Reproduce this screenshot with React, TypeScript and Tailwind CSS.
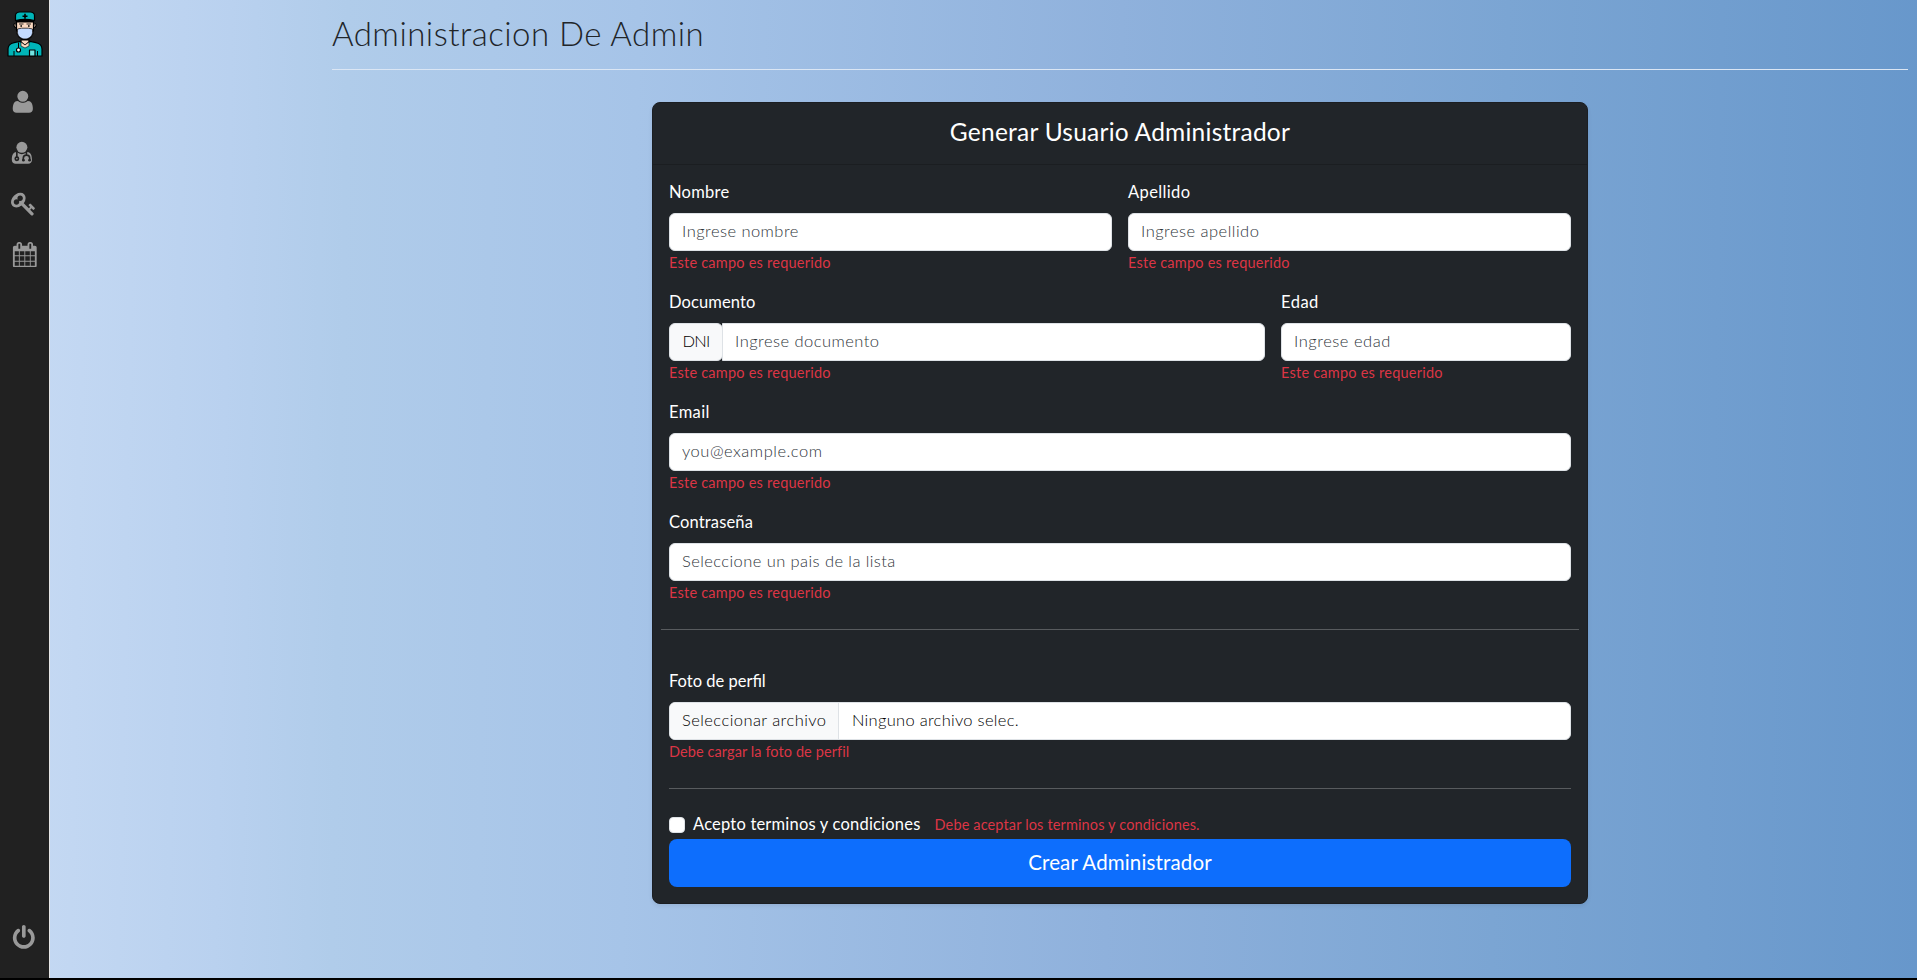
import type { ReactNode } from "react";

const faPaths = {
  user: "M1600 1405q0 120-73 189.5t-194 69.5h-874q-121 0-194-69.5t-73-189.5q0-53 3.5-103.5t14-109 26.5-108.5 43-97.5 62-81 85.5-53.5 111.5-20q9 0 42 21.5t74.5 48 108 48 133.5 21.5 133.5-21.5 108-48 74.5-48 42-21.5q61 0 111.5 20t85.5 53.5 62 81 43 97.5 26.5 108.5 14 109 3.5 103.5zm-320-893q0 159-112.5 271.5t-271.5 112.5-271.5-112.5-112.5-271.5 112.5-271.5 271.5-112.5 271.5 112.5 112.5 271.5z",
  key: "M832 512q0-80-56-136t-136-56-136 56-56 136q0 42 19 83-41-19-83-19-80 0-136 56t-56 136 56 136 136 56 136-56 56-136q0-42-19-83 41 19 83 19 80 0 136-56t56-136zm851 704q0 17-49 66t-66 49q-9 0-28.5-16t-36.5-33-38.5-40-24.5-26l-96 96 220 220q28 28 28 68 0 42-39 81t-81 39q-40 0-68-28l-671-671q-176 131-365 131-163 0-265.5-102.5t-102.5-265.5q0-160 95-313t248-248 313-95q163 0 265.5 102.5t102.5 265.5q0 189-131 365l355 355 96-96q-3-3-26-24.5t-40-38.5-33-36.5-16-28.5q0-17 49-66t66-49q13 0 23 10 6 6 46 44.5t82 79.5 86.5 86 73 78 28.5 41z",
  calendar: "M192 1664h288v-288h-288v288zm352 0h320v-288h-320v288zm-352-352h288v-320h-288v320zm352 0h320v-320h-320v320zm-352-384h288v-288h-288v288zm736 736h320v-288h-320v288zm-384-736h320v-288h-320v288zm768 736h288v-288h-288v288zm-384-352h320v-320h-320v320zm-352-864v-288q0-13-9.5-22.5t-22.5-9.5h-64q-13 0-22.5 9.5t-9.5 22.5v288q0 13 9.5 22.5t22.5 9.5h64q13 0 22.5-9.5t9.5-22.5zm736 864h288v-320h-288v320zm-384-384h320v-288h-320v288zm384 0h288v-288h-288v288zm32-480v-288q0-13-9.5-22.5t-22.5-9.5h-64q-13 0-22.5 9.5t-9.5 22.5v288q0 13 9.5 22.5t22.5 9.5h64q13 0 22.5-9.5t9.5-22.5zm384-64v1280q0 52-38 90t-90 38h-1408q-52 0-90-38t-38-90v-1280q0-52 38-90t90-38h128v-96q0-66 47-113t113-47h64q66 0 113 47t47 113v96h384v-96q0-66 47-113t113-47h64q66 0 113 47t47 113v96h128q52 0 90 38t38 90z",
  power: "M1664 896q0 156-61 298t-164 245-245 164-298 61-298-61-245-164-164-245-61-298q0-182 80.5-343t226.5-270q43-32 95.5-25t83.5 50q32 42 24.5 94.5t-49.5 84.5q-98 74-151.5 181t-53.5 228q0 104 40.5 198.5t109.5 163.5 163.5 109.5 198.5 40.5 198.5-40.5 163.5-109.5 109.5-163.5 40.5-198.5q0-121-53.5-228t-151.5-181q-42-32-49.5-84.5t24.5-94.5q31-43 84-50t95 25q146 109 226.5 270t80.5 343zm-640-768v640q0 52-38 90t-90 38-90-38-38-90v-640q0-52 38-90t90-38 90 38 38 90z",
};

function Glyph({ d }: { d: string }) {
  return (
    <svg viewBox="0 0 1792 1792" className="size-[25.6px] fill-[#999]">
      <path d={d} />
    </svg>
  );
}

function DoctorGlyph() {
  return (
    <svg viewBox="0 0 1792 1792" className="size-[25.6px]">
      <circle cx="832" cy="512" r="384" fill="#999" />
      <path
        d="M128 1405c0-300 70-560 330-560 30 0 160 145 374 145s344-145 374-145c260 0 330 260 330 560 0 170-110 259-267 259H395c-157 0-267-89-267-259z"
        fill="#999"
      />
      <g fill="none" stroke="#212121" strokeWidth="115">
        <path d="M480 800v400" />
        <circle cx="480" cy="1310" r="115" />
        <path d="M1150 800v260M930 1400v-130q0-210 225-210t225 210v130" />
      </g>
      <circle cx="940" cy="1410" r="95" fill="#212121" />
      <circle cx="1370" cy="1410" r="95" fill="#212121" />
    </svg>
  );
}

function Logo() {
  return (
    <svg viewBox="0 0 36 46" className="h-[46px] w-9" stroke="#000" strokeWidth="1.2" strokeLinejoin="round">
      <path d="M14 29h8v6l-4 3-4-3z" fill="#fbd9c0" />
      <path d="M1 45v-7c0-4 2.500-5.700 6-6.400l6-1.300 5 4 5-4 6 1.300c3.500.7 6 2.400 6 6.400v7z" fill="#00b5b8" />
      <path d="M14 31l4 3 4-3v4l-4 2-4-2z" fill="#fbd9c0" strokeWidth=".6" />
      <path d="M8 12.500c-1.500 0-1.500 4 1 4M28 12.500c1.500 0 1.500 4-1 4" fill="#fbd9c0" />
      <path d="M9.500 9h17v10c0 6-4 9.500-8.500 9.500S9.500 25 9.500 19z" fill="#fbd9c0" />
      <path d="M9.500 9h17v2.500h-17z" fill="#000" stroke="none" />
      <path d="M12 13h4.500M19.500 13H24" strokeWidth=".8" />
      <path d="M14.200 14.300v1.400M21.800 14.300v1.400" strokeWidth="1.600" />
      <path d="M10.500 18l4-.8h7l4 .8v3.500c0 4-4 6.500-7.500 6.500s-7.500-2.500-7.500-6.500z" fill="#c3dbff" strokeWidth=".7" />
      <path d="M8.500 9.500V4.500c0-2 1.500-3.200 4-3.500h11c2.500.3 4 1.500 4 3.500v5c-6-1.300-13-1.300-19 0z" fill="#00b5b8" />
      <path d="M18 2.800v5M15.500 5.300h5" strokeWidth="1.600" />
      <path d="M11.500 31.500v6M7 40v5M30.500 40v5" strokeWidth="1" />
      <circle cx="11.500" cy="39" r="2" fill="#fff" />
      <path d="M22.500 39h5.500v6h-5.500z" fill="#74e4e2" />
    </svg>
  );
}

const sidebarLinks = [
  { name: "Usuarios", icon: <Glyph d={faPaths.user} />, offset: "pl-[10px]" },
  { name: "Especialistas", icon: <DoctorGlyph />, offset: "pl-[10px]" },
  { name: "Claves", icon: <Glyph d={faPaths.key} />, offset: "pl-[10.500px]" },
  { name: "Turnos", icon: <Glyph d={faPaths.calendar} />, offset: "pl-[12px]" },
];

function Sidebar() {
  return (
    <nav className="flex w-[50px] shrink-0 flex-col border-r border-[#e5e5e5] bg-[#212121]">
      <div className="flex h-[76px] pl-[7px] pt-[11px]">
        <Logo />
      </div>
      {sidebarLinks.map((link) => (
        <a key={link.name} className={`flex h-[51px] items-center ${link.offset}`}>
          {link.icon}
        </a>
      ))}
      <a className="mt-auto mb-[15px] flex h-[51px] items-center pl-[11px]">
        <Glyph d={faPaths.power} />
      </a>
    </nav>
  );
}

function Field({ label, labelClass, error, errorClass, className = "", children }: {
  label: string;
  labelClass: string;
  error: string;
  errorClass: string;
  className?: string;
  children: ReactNode;
}) {
  return (
    <div className={`px-2 ${className}`}>
      <div className={`mb-2 h-6 text-[16.5px] leading-[22px] ${labelClass}`}>{label}</div>
      {children}
      <div className={`h-6 text-[14.5px] leading-6 text-[#dc3545] ${errorClass}`}>{error}</div>
    </div>
  );
}

const inputBase =
  "block h-[38px] w-full min-w-0 border border-[#dee2e6] bg-white px-3 pb-[3px] text-[16.5px] font-light text-[#212529] placeholder:text-[#2f353b] placeholder:opacity-100";

const required = { error: "Este campo es requerido", errorClass: "tracking-[0.23px]" };

export default function App() {
  return (
    <div className="h-[980px] bg-black pb-[2px] font-['Lato','Open_Sans',sans-serif] leading-6">
      <div className="flex h-full bg-[linear-gradient(91deg,#c5d9f3_2%,#b9d1ef_12%,#b0ccea_18%,#a6c4e8_33%,#8fb1dc_58%,#7ba5d3_78%,#6797cb_100%)]">
        <Sidebar />
        <main className="flex-1 pr-[9px] pl-[282px]">
          <h1 className="h-[69px] pt-[14px] text-[33px] leading-[38px] font-light tracking-[0.47px] text-[#212529]">
            Administracion De Admin
          </h1>
          <div className="h-px bg-[#dbe6f4]" />

          <form className="mx-auto mt-8 w-[936px] rounded-lg border border-[#1b1e22] bg-[#212529] text-white shadow-[0_2px_4px_rgba(0,0,0,0.075)]">
            <h2 className="h-[62px] border-b border-[#1b1e21] pt-[14px] text-center text-[24.5px] leading-[30px] tracking-[0.24px]">
              Generar Usuario Administrador
            </h2>

            <div className="px-2 pt-4 pb-4">
              <div className="grid grid-cols-6 gap-y-4">
                <Field label="Nombre" labelClass="tracking-[0.27px]" className="col-span-3" {...required}>
                  <input className={`${inputBase} rounded-md tracking-[0.46px]`} placeholder="Ingrese nombre" />
                </Field>
                <Field label="Apellido" labelClass="tracking-[0.37px]" className="col-span-3" {...required}>
                  <input className={`${inputBase} rounded-md tracking-[0.48px]`} placeholder="Ingrese apellido" />
                </Field>
                <Field label="Documento" labelClass="tracking-[0.12px]" className="col-span-4" {...required}>
                  <div className="flex">
                    <span className="flex h-[38px] w-[54px] shrink-0 items-center justify-center rounded-md border border-[#dee2e6] bg-[#f8f9fa] pb-[2px] text-[16.5px] font-light tracking-[-0.8px] text-black">
                      DNI
                    </span>
                    <input className={`${inputBase} -ml-px rounded-r-md tracking-[0.46px]`} placeholder="Ingrese documento" />
                  </div>
                </Field>
                <Field label="Edad" labelClass="tracking-[0.5px]" className="col-span-2" {...required}>
                  <input className={`${inputBase} rounded-md tracking-[0.53px]`} placeholder="Ingrese edad" />
                </Field>
                <Field label="Email" labelClass="tracking-[0.37px]" className="col-span-6" {...required}>
                  <input className={`${inputBase} rounded-md tracking-[0.51px]`} placeholder="you@example.com" />
                </Field>
                <Field label="Contraseña" labelClass="tracking-[0.15px]" className="col-span-6" {...required}>
                  <input className={`${inputBase} rounded-md tracking-[0.42px]`} placeholder="Seleccione un pais de la lista" />
                </Field>
              </div>

              <div className="mt-6 mb-10 h-px bg-[#585b5e]" />

              <Field
                label="Foto de perfil"
                labelClass="tracking-normal"
                error="Debe cargar la foto de perfil"
                errorClass="tracking-[0.09px]"
              >
                <div className="flex h-[38px] overflow-hidden rounded-md border border-[#dee2e6] bg-white text-[16.5px] leading-[34px] font-light text-black">
                  <span className="w-[169px] border-r border-[#dee2e6] bg-[#f8f9fa] pl-3 tracking-[0.44px]">
                    Seleccionar archivo
                  </span>
                  <span className="pl-[13px] tracking-[0.29px]">Ninguno archivo selec.</span>
                </div>
              </Field>

              <div className="px-2">
                <div className="my-6 h-px bg-[#585b5e]" />
                <div className="mb-0.5 flex h-6 items-center">
                  <span className="size-4 rounded-[4px] border border-[#dee2e6] bg-white" />
                  <span className="ml-2 pb-[2px] text-[16.5px] tracking-[0.2px]">Acepto terminos y condiciones</span>
                  <span className="ml-[14px] text-[14.5px] tracking-[0.14px] text-[#dc3545]">
                    Debe aceptar los terminos y condiciones.
                  </span>
                </div>
                <button type="button" className="block h-12 w-full rounded-lg bg-[#0d6efd] pb-[2px] text-[20.5px] tracking-[0.15px] text-white">
                  Crear Administrador
                </button>
              </div>
            </div>
          </form>
        </main>
      </div>
    </div>
  );
}
